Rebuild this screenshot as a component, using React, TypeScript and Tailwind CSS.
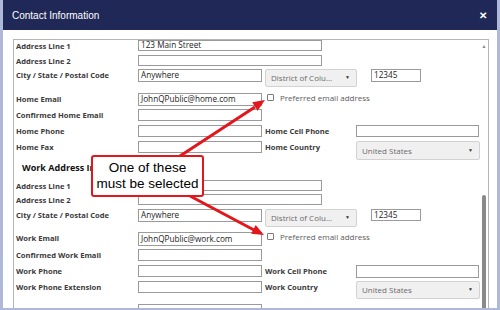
import React from 'react';

type RowProps = {
  h: string;
  label: string;
  children?: React.ReactNode;
};

function Row({ h, label, children }: RowProps) {
  return (
    <div className={`flex items-start shrink-0 ${h}`}>
      <div className="w-[122px] shrink-0 text-[7.6px] font-bold text-[#3a3a3a] leading-[12px] whitespace-nowrap">
        {label}
      </div>
      {children}
    </div>
  );
}

function Select({ w, h, value }: { w: string; h: string; value: string }) {
  return (
    <div className={`${w} ${h} shrink-0 flex items-center justify-between bg-[#f0f0f0] border border-[#d2d2d2] rounded-[2px] pl-[5px] pr-[6px] text-[8px] text-[#6b6b6b]`}>
      <span>{value}</span>
      <span className="text-[5px] text-[#333]">▼</span>
    </div>
  );
}

function Preferred() {
  return (
    <div className="flex items-start ml-[5px] mt-[1px]">
      <div className="w-[7px] h-[7px] border border-[#7a7a7a] bg-white rounded-[1px]" />
      <span className="ml-[6px] -mt-[2px] text-[8px] leading-[11px] text-[#5a5a5a]">Preferred email address</span>
    </div>
  );
}

export default function App() {
  const input = 'shrink-0 border border-[#9a9a9a] bg-white text-[8.2px] text-[#222] pl-[2px] flex items-center';

  return (
    <div className="relative w-[500px] h-[310px] overflow-hidden bg-white border-x-[3px] border-b-[2px] border-[#aeb8d8] flex flex-col" style={{ fontFamily: '"Open Sans", Arial, sans-serif' }}>
      {/* Title bar */}
      <div className="h-[30px] shrink-0 bg-[#1f2857] flex items-center justify-between pl-[9px] pr-[10px]">
        <span className="text-[10px] text-white" style={{ fontFamily: '"Liberation Sans", Arial, sans-serif' }}>Contact Information</span>
        <span className="text-[10px] font-bold text-white">✕</span>
      </div>

      {/* Body */}
      <div className="flex-1 min-h-0 pt-[9px] pl-[10px] pr-[8px]">
        <div className="h-full border border-b-0 border-[#b5b5b5] flex overflow-hidden">
          <div className="flex-1 pl-[2px] flex flex-col">
            <Row h="h-[15px]" label="Address Line 1">
              <div className={`${input} w-[184px] h-[11px] text-[7.5px]`}>123 Main Street</div>
            </Row>
            <Row h="h-[14px]" label="Address Line 2">
              <div className={`${input} w-[184px] h-[11px]`} />
            </Row>
            <Row h="h-[24px]" label="City / State / Postal Code">
              <div className={`${input} w-[124px] h-[13px]`}>Anywhere</div>
              <div className="ml-[3px]">
                <Select w="w-[92px]" h="h-[18px]" value="District of Colu..." />
              </div>
              <div className={`${input} ml-[14px] w-[50px] h-[13px]`}>12345</div>
            </Row>
            <Row h="h-[16px]" label="Home Email">
              <div className={`${input} w-[124px] h-[13px] border-[#5e5e5e]`}>JohnQPublic@home.com</div>
              <Preferred />
            </Row>
            <Row h="h-[16px]" label="Confirmed Home Email">
              <div className={`${input} w-[124px] h-[12px]`} />
            </Row>
            <Row h="h-[16px]" label="Home Phone">
              <div className={`${input} w-[124px] h-[12px]`} />
              <div className="ml-[3px] w-[91px] shrink-0 text-[7.6px] font-bold text-[#3a3a3a] leading-[12px]">Home Cell Phone</div>
              <div className={`${input} w-[123px] h-[12px]`} />
            </Row>
            <Row h="h-[20px]" label="Home Fax">
              <div className={`${input} w-[124px] h-[12px]`} />
              <div className="ml-[3px] w-[91px] shrink-0 text-[7.6px] font-bold text-[#3a3a3a] leading-[12px]">Home Country</div>
              <Select w="w-[124px]" h="h-[19px]" value="United States" />
            </Row>

            <div className="h-[19px] shrink-0 pl-[6px] pt-[1px] text-[9px] font-bold text-[#111] leading-[12px]">
              Work Address Information
            </div>

            <Row h="h-[14px]" label="Address Line 1">
              <div className={`${input} w-[184px] h-[11px]`} />
            </Row>
            <Row h="h-[15px]" label="Address Line 2">
              <div className={`${input} w-[184px] h-[11px]`} />
            </Row>
            <Row h="h-[23px]" label="City / State / Postal Code">
              <div className={`${input} w-[124px] h-[13px]`}>Anywhere</div>
              <div className="ml-[3px]">
                <Select w="w-[92px]" h="h-[18px]" value="District of Colu..." />
              </div>
              <div className={`${input} ml-[14px] w-[50px] h-[12px]`}>12345</div>
            </Row>
            <Row h="h-[17px]" label="Work Email">
              <div className={`${input} w-[124px] h-[14px] border-[#4e4e4e]`}>JohnQPublic@work.com</div>
              <Preferred />
            </Row>
            <Row h="h-[16px]" label="Confirmed Work Email">
              <div className={`${input} w-[124px] h-[12px]`} />
            </Row>
            <Row h="h-[16px]" label="Work Phone">
              <div className={`${input} w-[124px] h-[12px]`} />
              <div className="ml-[3px] w-[91px] shrink-0 text-[7.6px] font-bold text-[#3a3a3a] leading-[12px]">Work Cell Phone</div>
              <div className={`${input} w-[123px] h-[13px]`} />
            </Row>
            <Row h="h-[23px]" label="Work Phone Extension">
              <div className={`${input} w-[124px] h-[12px]`} />
              <div className="ml-[3px] w-[91px] shrink-0 text-[7.6px] font-bold text-[#3a3a3a] leading-[12px]">Work Country</div>
              <Select w="w-[124px]" h="h-[18px]" value="United States" />
            </Row>
            <Row h="h-[16px]" label="Work Fax">
              <div className={`${input} w-[124px] h-[12px]`} />
            </Row>
          </div>

          {/* Scrollbar */}
          <div className="w-[8px] shrink-0 flex flex-col items-center pt-[3px]">
            <span className="text-[5px] leading-[6px] text-[#888]">▲</span>
            <div className="h-[146px] shrink-0" />
            <div className="w-[4px] flex-1 bg-[#8a8a8a] rounded-t-[2px]" />
          </div>
        </div>
      </div>

      {/* Annotation arrows */}
      <svg className="absolute left-[-3px] top-0 pointer-events-none" width="500" height="310" viewBox="0 0 500 310">
        <line x1="180" y1="156" x2="255" y2="107" stroke="#e3161b" strokeWidth="3" />
        <polygon points="265,100 257.6,110.7 252.2,102.3" fill="#e3161b" />
        <line x1="190" y1="196" x2="254" y2="230" stroke="#e3161b" strokeWidth="3" />
        <polygon points="264,235 251.1,233.8 255.7,225" fill="#e3161b" />
      </svg>

      {/* Callout */}
      <div className="absolute left-[88px] top-[155px] w-[113px] h-[42px] bg-white border-2 border-[#e3161b] rounded-[3px] flex flex-col items-center justify-center text-[13.5px] leading-[16px] text-black" style={{ fontFamily: '"Liberation Sans", Arial, sans-serif' }}>
        <span>One of these</span>
        <span>must be selected</span>
      </div>
    </div>
  );
}
